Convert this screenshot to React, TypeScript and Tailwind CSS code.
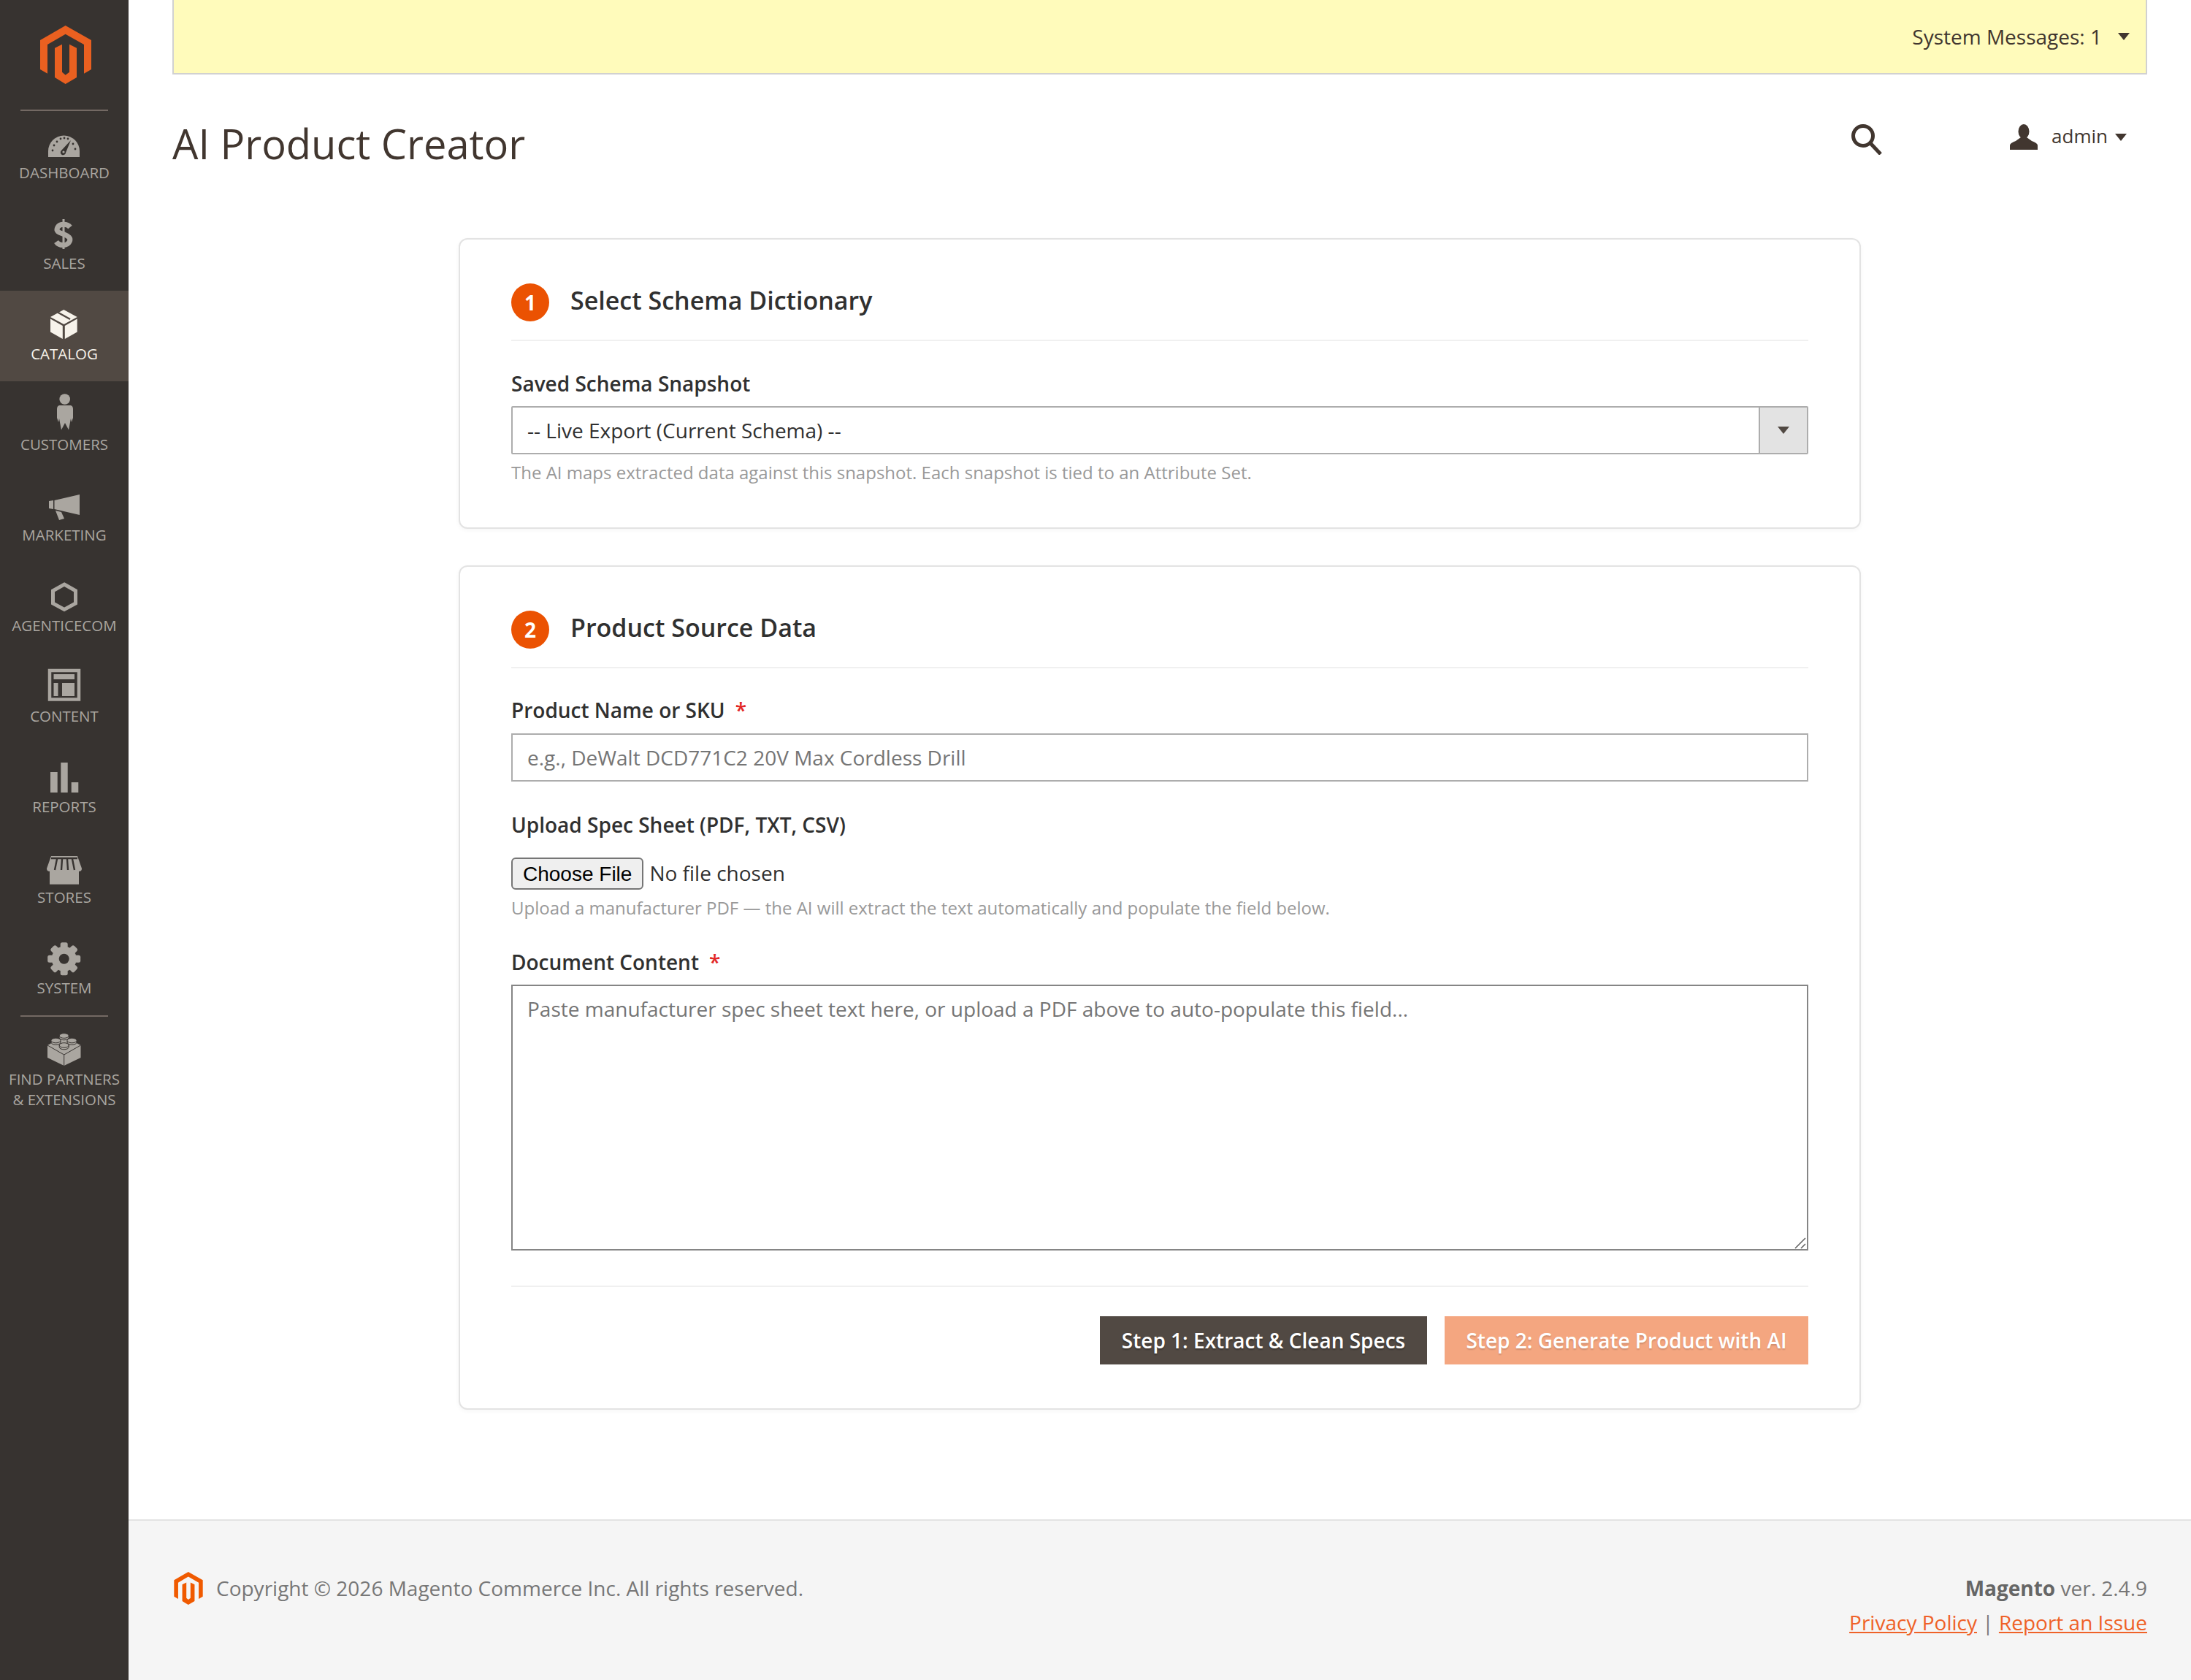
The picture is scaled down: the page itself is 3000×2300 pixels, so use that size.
const FONT = "font-['Open_Sans',sans-serif]";

function MagentoLogo({ className }: { className: string }) {
  return (
    <svg className={className} viewBox="162 105 210 240" fill="currentColor">
      <polygon points="266,105 372,165 372,285 342,302 342,183 266,140 192,183 192,302 162,285 162,165" />
      <polygon points="222,197 252,182 252,296 266,308 282,296 282,182 312,197 312,318 266,345 222,318" />
    </svg>
  );
}

function Caret({ className }: { className: string }) {
  return (
    <svg className={className} viewBox="0 0 16 10" fill="currentColor">
      <polygon points="0,0 16,0 8,10" />
    </svg>
  );
}

// nav icons are drawn in a 176x72 box so x is the page x and y is the offset from the item top
const BG = '#373330';

const icons: Record<string, React.ReactNode> = {
  dashboard: (
    <>
      <path d="M66 65 V57 A21.5 21.5 0 0 1 109 57 V65 Z" />
      {[
        [72, 56],
        [74, 49],
        [78, 44],
        [83, 40],
        [88, 39],
        [93, 40],
        [100, 47],
        [103, 54],
      ].map(([x, y]) => (
        <circle key={`${x}-${y}`} cx={x} cy={y} r="1.4" fill={BG} />
      ))}
      <path d="M84 56 L97 42 L90 59 A3.6 3.6 0 1 1 84 56 Z" fill={BG} />
      <circle cx="87" cy="58" r="1.6" />
    </>
  ),
  sales: (
    <>
      <path
        d="M96 37 C92 32 82 32 79 37 C75 44 84 45 88 47 C93 49 98 52 95 57 C92 63 81 63 77 57"
        fill="none"
        stroke="currentColor"
        strokeWidth="7"
      />
      <rect x="85.5" y="26" width="3" height="41" />
    </>
  ),
  catalog: (
    <>
      <polygon points="87.3,26 105.7,36 87.5,46 69,36" />
      <polygon points="69,38.5 85.8,48 85.8,66 69,56.5" />
      <polygon points="105.7,38.5 88.8,48 88.8,66 105.7,56.5" />
      <line x1="78" y1="29" x2="96" y2="39" stroke="#514943" strokeWidth="2.5" />
    </>
  ),
  customers: (
    <>
      <circle cx="88.7" cy="24.5" r="7.3" />
      <path d="M81 33 H97 Q100 34 100 38 L100 50 L98 56 L97 51 L94 66.5 L89 57 L84 66.5 L81 51 L80 56 L78 50 L78 38 Q78 34 81 33 Z" />
    </>
  ),
  marketing: (
    <>
      <polygon points="109,31 109,59 74.5,51 74.5,39" />
      <polygon points="67,40 73,39 73,51 67,50" />
      <polygon points="76,53 84,55 88,64 81,66" />
    </>
  ),
  agenticecom: (
    <polygon
      points="88,30 103.5,38.8 103.5,56 88,64.5 72.5,56 72.5,38.8"
      fill="none"
      stroke="currentColor"
      strokeWidth="5"
    />
  ),
  content: (
    <>
      <rect x="68" y="24" width="40" height="39.5" fill="none" stroke="currentColor" strokeWidth="4.5" />
      <rect x="73.5" y="29" width="28.5" height="7" />
      <rect x="73.5" y="41" width="6" height="18" />
      <rect x="85" y="41" width="17" height="18" />
    </>
  ),
  reports: (
    <>
      <rect x="69" y="39" width="9.7" height="28" />
      <rect x="83.3" y="26" width="9.4" height="41" />
      <rect x="97.7" y="53" width="9.6" height="14" />
    </>
  ),
  stores: (
    <>
      <path d="M70 30 H106 L112 47 Q112 51 108 51 H68 Q64 51 64 47 Z" />
      <rect x="68" y="50" width="40" height="18.7" />
      <path
        d="M70 33 H106 M78 34 L75 49 M85 34 L84 49 M92 34 L93 49 M99 34 L102 49"
        fill="none"
        stroke={BG}
        strokeWidth="2.4"
      />
    </>
  ),
  system: (
    <>
      <circle cx="87.7" cy="46.7" r="17" />
      {[0, 45, 90, 135, 180, 225, 270, 315].map((deg) => (
        <rect
          key={deg}
          x="82.7"
          y="24.2"
          width="10"
          height="9"
          rx="2.5"
          transform={`rotate(${deg} 87.7 46.7)`}
        />
      ))}
      <circle cx="87.7" cy="46.7" r="7" fill={BG} />
    </>
  ),
  partners: (
    <>
      <polygon points="87.7,29 110.5,41 110.5,58 87.7,69 65,58 65,41" />
      <path d="M65 41 L87.7 54 L110.5 41 M87.7 54 V69" fill="none" stroke={BG} strokeWidth="1" />
      {[
        [87.7, 28],
        [76.5, 34.5],
        [98.5, 34.5],
        [87.7, 41],
      ].map(([x, y]) => (
        <g key={`${x}-${y}`} stroke={BG} strokeWidth="1">
          <path d={`M${x - 6.5} ${y} v2.5 a6.5 3.3 0 0 0 13 0 v-2.5 Z`} />
          <ellipse cx={x} cy={y} rx="6.5" ry="3.3" />
        </g>
      ))}
    </>
  ),
};

const navItems = [
  { key: 'dashboard', label: 'DASHBOARD' },
  { key: 'sales', label: 'SALES' },
  { key: 'catalog', label: 'CATALOG', active: true },
  { key: 'customers', label: 'CUSTOMERS' },
  { key: 'marketing', label: 'MARKETING' },
  { key: 'agenticecom', label: 'AGENTICECOM' },
  { key: 'content', label: 'CONTENT' },
  { key: 'reports', label: 'REPORTS' },
  { key: 'stores', label: 'STORES' },
  { key: 'system', label: 'SYSTEM' },
];

function NavItem({ item }: { item: { key: string; label: string; active?: boolean } }) {
  return (
    <div
      className={`h-[124px] flex flex-col items-center ${
        item.active ? 'bg-[#514943] text-[#f7f3eb]' : 'text-[#aaa6a0]'
      }`}
    >
      <svg className="block w-[176px] h-[72px] shrink-0" viewBox="0 0 176 72" fill="currentColor">
        {icons[item.key]}
      </svg>
      <span className="mt-[1px] text-[20.5px] leading-[27px] text-center">{item.label}</span>
    </div>
  );
}

function Sidebar() {
  return (
    <aside className="w-[176px] shrink-0 bg-[#373330]">
      <div className="h-[150px] flex justify-center pt-[35px] pr-[2px] box-border relative">
        <MagentoLogo className="w-[70px] h-[80px] ml-[6px] text-[#ea6020]" />
      </div>
      <div className="h-0 mx-[28px] border-t-2 border-[#736963]" />
      <div className="-mt-[2px]">
        {navItems.map((item) => (
          <NavItem key={item.key} item={item} />
        ))}
      </div>
      <div className="h-0 mx-[28px] border-t-2 border-[#736963]" />
      <div className="-mt-[2px] flex flex-col items-center text-[#aaa6a0]">
        <svg className="block w-[176px] h-[72px] shrink-0" viewBox="0 0 176 72" fill="currentColor">
          {icons.partners}
        </svg>
        <span className="mt-[1px] text-[20.5px] leading-[28px] text-center">
          FIND PARTNERS
          <br />& EXTENSIONS
        </span>
      </div>
    </aside>
  );
}

function StepTitle({ step, title }: { step: number; title: string }) {
  return (
    <div className="flex items-center gap-[29px] pb-[25px] border-b-2 border-[#f0f0f0]">
      <span className="w-[52px] h-[52px] rounded-full bg-[#eb5202] text-white text-[28px] font-bold flex items-center justify-center">
        {step}
      </span>
      <h2 className="text-[34px] leading-[52px] font-semibold text-[#303030] -mt-[7px]">{title}</h2>
    </div>
  );
}

function Label({ text, required, className }: { text: string; required?: boolean; className?: string }) {
  return (
    <label className={`block text-[28px] leading-[36px] font-semibold text-[#303030] ${className ?? ''}`}>
      {text}
      {required && <span className="ml-[14px] text-[#e22626]">*</span>}
    </label>
  );
}

function Hint({ text }: { text: string }) {
  return <p className="mt-[7px] text-[24px] leading-[36px] text-[#999]">{text}</p>;
}

function Card({ children }: { children: React.ReactNode }) {
  return (
    <section className="border-2 border-[#e3e3e3] rounded-[12px] bg-white px-[70px] pt-[60px] shadow-[0_2px_6px_rgba(0,0,0,0.04)]">
      {children}
    </section>
  );
}

export default function App() {
  return (
    <div className={`${FONT} flex w-[3000px] min-h-[2300px] bg-white text-[28px] text-[#303030]`}>
      <Sidebar />
      <div className="flex-1 flex flex-col min-w-0">
        <main className="flex-1 px-[60px]">
          <div className="h-[102px] flex items-center justify-end gap-[22px] pr-[22px] pb-[1px] bg-[#fffbbb] border-x-2 border-b-2 border-[#d1d1d1] text-[#41362f]">
            <span>System Messages: 1</span>
            <Caret className="w-[16px] h-[10px]" />
          </div>

          <div className="flex items-start justify-between mt-[66px]">
            <h1 className="text-[56px] leading-[56px] font-normal text-[#41362f]">AI Product Creator</h1>
            <div className="flex items-center pr-[28px] pt-[2px] text-[#41362f]">
              <svg className="w-[42px] h-[42px]" viewBox="0 0 42 42" fill="none" stroke="currentColor">
                <circle cx="16" cy="16" r="13.5" strokeWidth="5" />
                <line x1="26" y1="26" x2="40" y2="41" strokeWidth="5" />
              </svg>
              <svg className="ml-[175px] w-[38px] h-[35px] -mt-[8px]" viewBox="0 0 38 35" fill="currentColor">
                <ellipse cx="19" cy="10" rx="7.5" ry="10" />
                <path d="M0 35 V29 Q0 26 8 23 L15 18 H23 L30 23 Q38 26 38 29 V35 Z" />
              </svg>
              <span className="ml-[19px] -mt-[10px] text-[26px] leading-[36px]">admin</span>
              <Caret className="ml-[10px] w-[16px] h-[10px] -mt-[6px]" />
            </div>
          </div>

          <div className="w-[1920px] mx-auto mt-[102px] flex flex-col gap-[50px]">
            <Card>
              <StepTitle step={1} title="Select Schema Dictionary" />
              <Label text="Saved Schema Snapshot" className="mt-[40px]" />
              <div className="mt-[13px] flex h-[66px] border-2 border-[#adadad] rounded-[2px]">
                <select className="flex-1 appearance-none bg-white px-[20px] text-[28px] text-[#303030] outline-none">
                  <option>-- Live Export (Current Schema) --</option>
                </select>
                <span className="w-[66px] flex items-center justify-center bg-[#e3e3e3] border-l-2 border-[#adadad] text-[#514943]">
                  <Caret className="w-[16px] h-[10px]" />
                </span>
              </div>
              <Hint text="The AI maps extracted data against this snapshot. Each snapshot is tied to an Attribute Set." />
              <div className="h-[57px]" />
            </Card>

            <Card>
              <StepTitle step={2} title="Product Source Data" />
              <Label text="Product Name or SKU" required className="mt-[39px]" />
              <input
                placeholder="e.g., DeWalt DCD771C2 20V Max Cordless Drill"
                className="mt-[14px] block w-full h-[66px] border-2 border-[#adadad] px-[20px] text-[28px] outline-none placeholder:text-[#757575]"
              />
              <Label text="Upload Spec Sheet (PDF, TXT, CSV)" className="mt-[41px]" />
              <input
                type="file"
                className="mt-[27px] block w-full h-[44px] text-[28px] text-[#303030] file:h-[44px] file:mr-[8px] file:px-[14px] file:bg-[#efefef] file:border-2 file:border-[#767676] file:rounded-[6px] file:text-[#000] file:font-['Liberation_Sans',sans-serif] file:text-[28px]"
              />
              <Hint text="Upload a manufacturer PDF — the AI will extract the text automatically and populate the field below." />
              <Label text="Document Content" required className="mt-[38px]" />
              <div className="relative mt-[13px]">
                <textarea
                  placeholder="Paste manufacturer spec sheet text here, or upload a PDF above to auto-populate this field..."
                  className="block w-full h-[364px] resize-none border-2 border-[#858585] px-[20px] pt-[13px] text-[28px] leading-[36px] outline-none placeholder:text-[#757575]"
                />
                <svg className="absolute right-[2px] bottom-[2px] w-[18px] h-[18px]" viewBox="0 0 18 18" fill="none" stroke="#666" strokeWidth="1.6">
                  <path d="M2 17 L16 3 M10 17 L16 11" />
                </svg>
              </div>
              <div className="mt-[48px] pt-[40px] border-t-2 border-[#f0f0f0] flex justify-end gap-[24px] pb-[60px]">
                <button className="h-[66px] w-[448px] bg-[#514943] text-white text-[28px] font-semibold [text-shadow:0_2px_2px_rgba(0,0,0,0.3)]">
                  Step 1: Extract &amp; Clean Specs
                </button>
                <button className="h-[66px] w-[498px] bg-[#f4a680] text-white text-[28px] font-semibold [text-shadow:0_2px_2px_rgba(0,0,0,0.15)]">
                  Step 2: Generate Product with AI
                </button>
              </div>
            </Card>
          </div>
        </main>

        <footer className="h-[220px] bg-[#f5f5f5] border-t-2 border-[#e3e3e3] px-[60px] flex justify-between items-start pt-[70px] text-[#777]">
          <div className="flex items-center gap-[18px] pl-[2px]">
            <MagentoLogo className="w-[40px] h-[45px] text-[#f05a00]" />
            <span className="leading-[45px] -mt-[1px]">Copyright © 2026 Magento Commerce Inc. All rights reserved.</span>
          </div>
          <div className="text-right leading-[47px] -mt-[1px]">
            <div>
              <strong className="font-bold text-[#666]">Magento</strong> ver. 2.4.9
            </div>
            <div>
              <a className="text-[#ef6228] underline">Privacy Policy</a> |{' '}
              <a className="text-[#ef6228] underline">Report an Issue</a>
            </div>
          </div>
        </footer>
      </div>
    </div>
  );
}
